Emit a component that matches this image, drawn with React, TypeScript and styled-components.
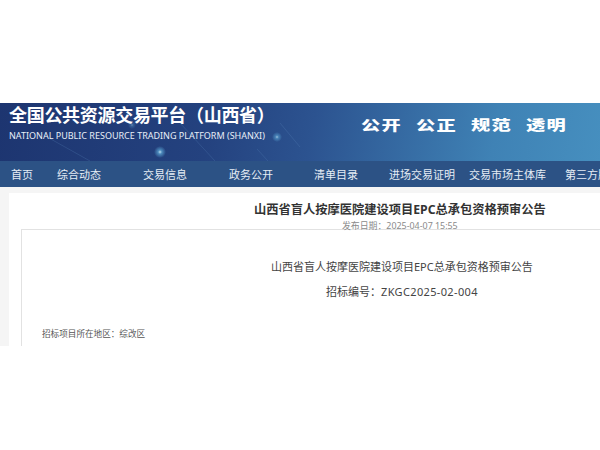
import styled, { createGlobalStyle } from "styled-components";

const cjk = `"Noto Sans", "Noto Sans CJK SC", sans-serif`;

const navItems = [
  { label: "首页", width: 45, pad: 11 },
  { label: "综合动态", width: 86, pad: 12 },
  { label: "交易信息", width: 86, pad: 12 },
  { label: "政务公开", width: 86, pad: 12 },
  { label: "清单目录", width: 86, pad: 11 },
  { label: "进场交易证明", width: 80, pad: 0 },
  { label: "交易市场主体库", width: 96, pad: 0 },
  { label: "第三方服务", width: 60, pad: 0 },
];

const GlobalStyle = createGlobalStyle`
  html, body {
    margin: 0;
    padding: 0;
    background: #fff;
    overflow: hidden;
  }
  body {
    font-family: ${cjk};
  }
`;

const Page = styled.div`
  width: 600px;
  height: 450px;
  padding-top: 103px;
  box-sizing: border-box;
  overflow: hidden;
`;

const Banner = styled.header`
  position: relative;
  height: 58px;
  display: flex;
  justify-content: space-between;
  background: linear-gradient(100deg, #1d3570 0%, #24427f 35%, #2c5390 52%, #3f82b5 82%, #468fbf 100%);
  overflow: hidden;
`;

const Sparkles = styled.svg`
  position: absolute;
  left: 0;
  top: 0;
`;

const Brand = styled.div`
  position: relative;
  padding: 0 0 0 9px;
  color: #fff;
`;

const BrandTitle = styled.div`
  font-size: 18px;
  line-height: 22px;
  margin-top: 1px;
  font-weight: 700;
  letter-spacing: -0.3px;
  white-space: nowrap;
`;

const BrandSub = styled.div`
  font-size: 9px;
  line-height: 11px;
  margin-top: 4px;
  white-space: nowrap;
  color: #e8eef7;
`;

const Slogan = styled.div`
  position: relative;
  display: flex;
  gap: 16px;
  padding: 11px 35px 0 0;
  color: #fff;
  font-size: 15px;
  line-height: 18px;
  font-weight: 900;
`;

const SloganWord = styled.span`
  display: block;
  width: 39px;
  letter-spacing: 1px;
  white-space: nowrap;
  transform: scale(1.28, 0.9);
  transform-origin: left center;
`;

const Nav = styled.nav`
  height: 26px;
  display: flex;
  background: #2c5285;
  overflow: hidden;
`;

const NavItem = styled.a<{ $width: number; $pad: number }>`
  flex: 0 0 ${({ $width }) => $width}px;
  padding-left: ${({ $pad }) => $pad}px;
  box-sizing: border-box;
  font-size: 11px;
  line-height: 27px;
  color: #e6edf5;
  white-space: nowrap;
`;

const Body = styled.main`
  height: 159px;
  padding: 6px 0 0 9px;
  box-sizing: border-box;
  background: #f5f5f5;
  overflow: hidden;
`;

const Panel = styled.section`
  height: 153px;
  padding: 0 0 0 12px;
  background: #fff;
`;

const Heading = styled.h1`
  margin: 0;
  padding: 8px 0 0 233px;
  font-size: 12.25px;
  line-height: 18px;
  font-weight: 700;
  color: #333;
  white-space: nowrap;
`;

const Meta = styled.div`
  padding-left: 321px;
  height: 10px;
  font-size: 8.9px;
  line-height: 13px;
  color: #8a8a8a;
  white-space: nowrap;
`;

const Article = styled.article`
  height: 130px;
  padding-top: 28px;
  box-sizing: border-box;
  border: 1px solid #e2e2e2;
  border-right: 0;
  border-bottom: 0;
`;

const CenterLine = styled.p<{ $pad: number; $gap: number }>`
  margin: 0 0 ${({ $gap }) => $gap}px;
  padding-left: ${({ $pad }) => $pad}px;
  font-size: 11px;
  line-height: 18px;
  color: #444;
  white-space: nowrap;
`;

const TenderCode = styled.span`
  letter-spacing: 0.35px;
`;

const Region = styled.p`
  margin: 0;
  padding-left: 20px;
  font-size: 8.6px;
  line-height: 14px;
  color: #555;
  white-space: nowrap;
`;

const sparkleSpots = [
  { x: 160, y: 49, r: 6, o: 0.9 },
  { x: 132, y: 22, r: 4, o: 0.4 },
  { x: 277, y: 34, r: 5, o: 0.7 },
];

const slogans = ["公开", "公正", "规范", "透明"];

export default function App() {
  return (
    <Page>
      <GlobalStyle />
      <Banner>
        <Sparkles width="600" height="58" viewBox="0 0 600 58">
          <defs>
            <radialGradient id="glow">
              <stop offset="0%" stopColor="#d8f4ff" />
              <stop offset="35%" stopColor="#6cc4ee" stopOpacity="0.6" />
              <stop offset="100%" stopColor="#6cc4ee" stopOpacity="0" />
            </radialGradient>
          </defs>
          <g stroke="#5b86bd" strokeOpacity="0.25" fill="none">
            <path d="M40 30 L90 58" />
            <path d="M180 20 L215 58" />
            <path d="M257 46 L268 58" />
            <path d="M280 20 L300 44" />
          </g>
          {sparkleSpots.map((s) => (
            <circle key={s.x} cx={s.x} cy={s.y} r={s.r} fill="url(#glow)" opacity={s.o} />
          ))}
        </Sparkles>
        <Brand>
          <BrandTitle>全国公共资源交易平台（山西省）</BrandTitle>
          <BrandSub>NATIONAL PUBLIC RESOURCE TRADING PLATFORM (SHANXI)</BrandSub>
        </Brand>
        <Slogan>
          {slogans.map((word) => (
            <SloganWord key={word}>{word}</SloganWord>
          ))}
        </Slogan>
      </Banner>
      <Nav>
        {navItems.map((item) => (
          <NavItem key={item.label} $width={item.width} $pad={item.pad}>
            {item.label}
          </NavItem>
        ))}
      </Nav>
      <Body>
        <Panel>
          <Heading>山西省盲人按摩医院建设项目EPC总承包资格预审公告</Heading>
          <Meta>发布日期：2025-04-07 15:55</Meta>
          <Article>
            <CenterLine $pad={249} $gap={7}>
              山西省盲人按摩医院建设项目EPC总承包资格预审公告
            </CenterLine>
            <CenterLine $pad={304} $gap={26}>
              招标编号：<TenderCode>ZKGC2025-02-004</TenderCode>
            </CenterLine>
            <Region>招标项目所在地区：综改区</Region>
          </Article>
        </Panel>
      </Body>
    </Page>
  );
}
